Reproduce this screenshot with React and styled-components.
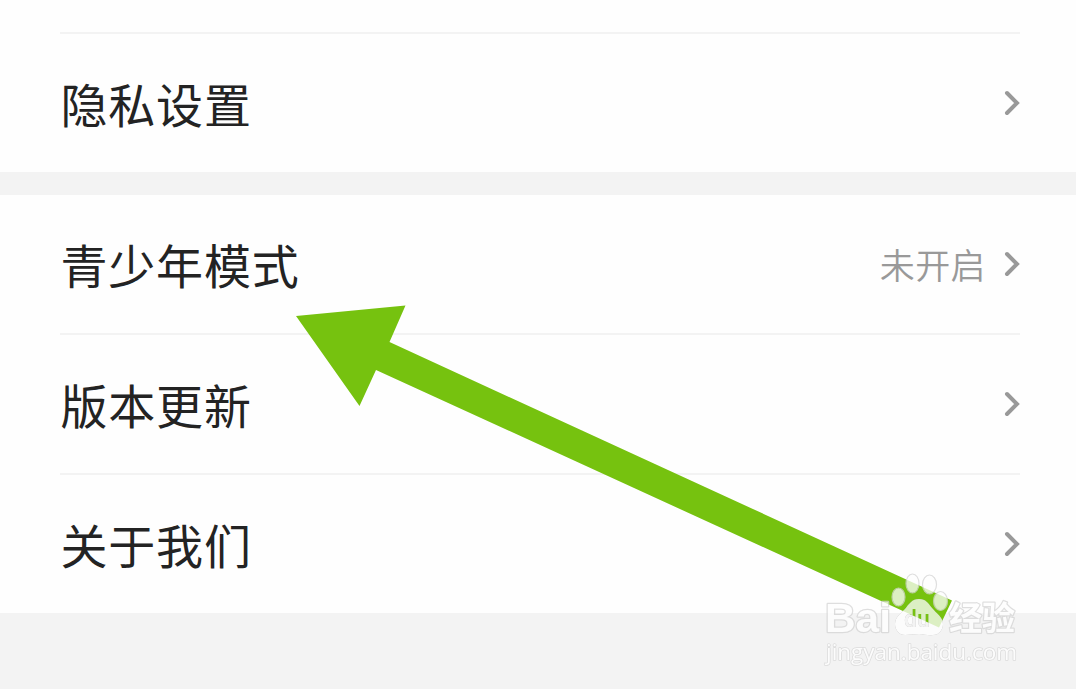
import React from "react";
import styled, { createGlobalStyle } from "styled-components";

const GlobalStyle = createGlobalStyle`
  * {
    box-sizing: border-box;
  }

  body {
    margin: 0;
    background: #f3f3f3;
    font-family: "Noto Sans CJK SC", sans-serif;
  }
`;

const Page = styled.main`
  position: relative;
  height: 689px;
  overflow: hidden;
`;

const Group = styled.section`
  padding: ${(props) => (props.$continued ? "32px" : "0")} 56px 0 60px;
  background: #fefefe;

  & + & {
    margin-top: 23px;
  }
`;

const Row = styled.div`
  display: flex;
  align-items: center;
  height: ${(props) => (props.$divided ? 140 : 138)}px;
  border-top: ${(props) => (props.$divided ? "2px solid #f3f3f3" : "none")};
`;

const Label = styled.span`
  flex: 1;
  color: #232323;
  font-size: 47px;
  line-height: 60px;
  letter-spacing: 0.8px;
  padding-left: 0.5px;
`;

const Value = styled.span`
  margin-right: 16px;
  color: #999;
  font-size: 35px;
  font-weight: 350;
  line-height: 48px;
  letter-spacing: 0.4px;
`;

const Chevron = styled.svg`
  width: 18px;
  height: 26px;
  fill: none;
  stroke: #999;
  stroke-width: 4;
  stroke-linecap: round;
`;

const Overlay = styled.svg`
  position: absolute;
  top: 0;
  left: 0;
`;

const Pad = styled.g`
  filter: drop-shadow(0 0 0.6px #999);
`;

const Item = ({ label, value, divided }) => (
  <Row $divided={divided}>
    <Label>{label}</Label>
    {value && <Value>{value}</Value>}
    <Chevron viewBox="0 0 18 26">
      <path d="M5 3 15 13 5 23" />
    </Chevron>
  </Row>
);

const Watermark = () => (
  <g opacity="0.75" fill="#fff" stroke="#d4d4d4" strokeWidth="1.2" strokeLinejoin="round">
    <g fontFamily="Liberation Sans, sans-serif" fontWeight="700" paintOrder="stroke" strokeWidth="2.5">
      <text x="825" y="632" fontSize="41" textLength="66" lengthAdjust="spacingAndGlyphs">
        Bai
      </text>
      <text x="949" y="630" fontFamily="Noto Sans CJK SC, sans-serif" fontSize="33">
        经验
      </text>
    </g>
    <ellipse cx="898.500" cy="597" rx="6.500" ry="9" />
    <ellipse cx="912.500" cy="583.500" rx="6.500" ry="9.500" />
    <ellipse cx="929.500" cy="584.500" rx="7" ry="9.500" />
    <ellipse cx="940.500" cy="601" rx="7" ry="9.500" />
    <mask id="du" maskUnits="userSpaceOnUse" x="880" y="590" width="80" height="50">
      <rect x="880" y="590" width="80" height="50" stroke="none" />
      <text
        x="904"
        y="627"
        fontFamily="Liberation Sans, sans-serif"
        fontSize="23"
        fontWeight="700"
        fill="#000"
        stroke="none"
        textLength="26"
        lengthAdjust="spacingAndGlyphs"
      >
        du
      </text>
    </mask>
    <Pad>
      <path
        mask="url(#du)"
        stroke="none"
        d="M919 599c-7 0-10 5-14 10-4 4-10 8-10 15 0 6 4 11 10 11 5 0 9-1 14-1s9 2 14 1c6 0 10-5 10-11 0-7-7-11-11-16-4-5-6-9-13-9Z"
      />
    </Pad>
    <text
      x="826"
      y="660"
      fontFamily="Open Sans, sans-serif"
      fontSize="22.500"
      paintOrder="stroke"
      strokeWidth="1.6"
      textLength="191"
    >
      jingyan.baidu.com
    </text>
  </g>
);

const App = () => (
  <Page>
    <GlobalStyle />
    <Group $continued>
      <Item label="隐私设置" divided />
    </Group>
    <Group>
      <Item label="青少年模式" value="未开启" />
      <Item label="版本更新" divided />
      <Item label="关于我们" divided />
    </Group>
    <Overlay width="1076" height="689" viewBox="0 0 1076 689">
      <path
        fill="#76c20f"
        d="M296 316 405.500 305.500 389.500 342 952 600.500 939 627.500 376 370 359.500 406Z"
      />
      <Watermark />
    </Overlay>
  </Page>
);

export default App;
